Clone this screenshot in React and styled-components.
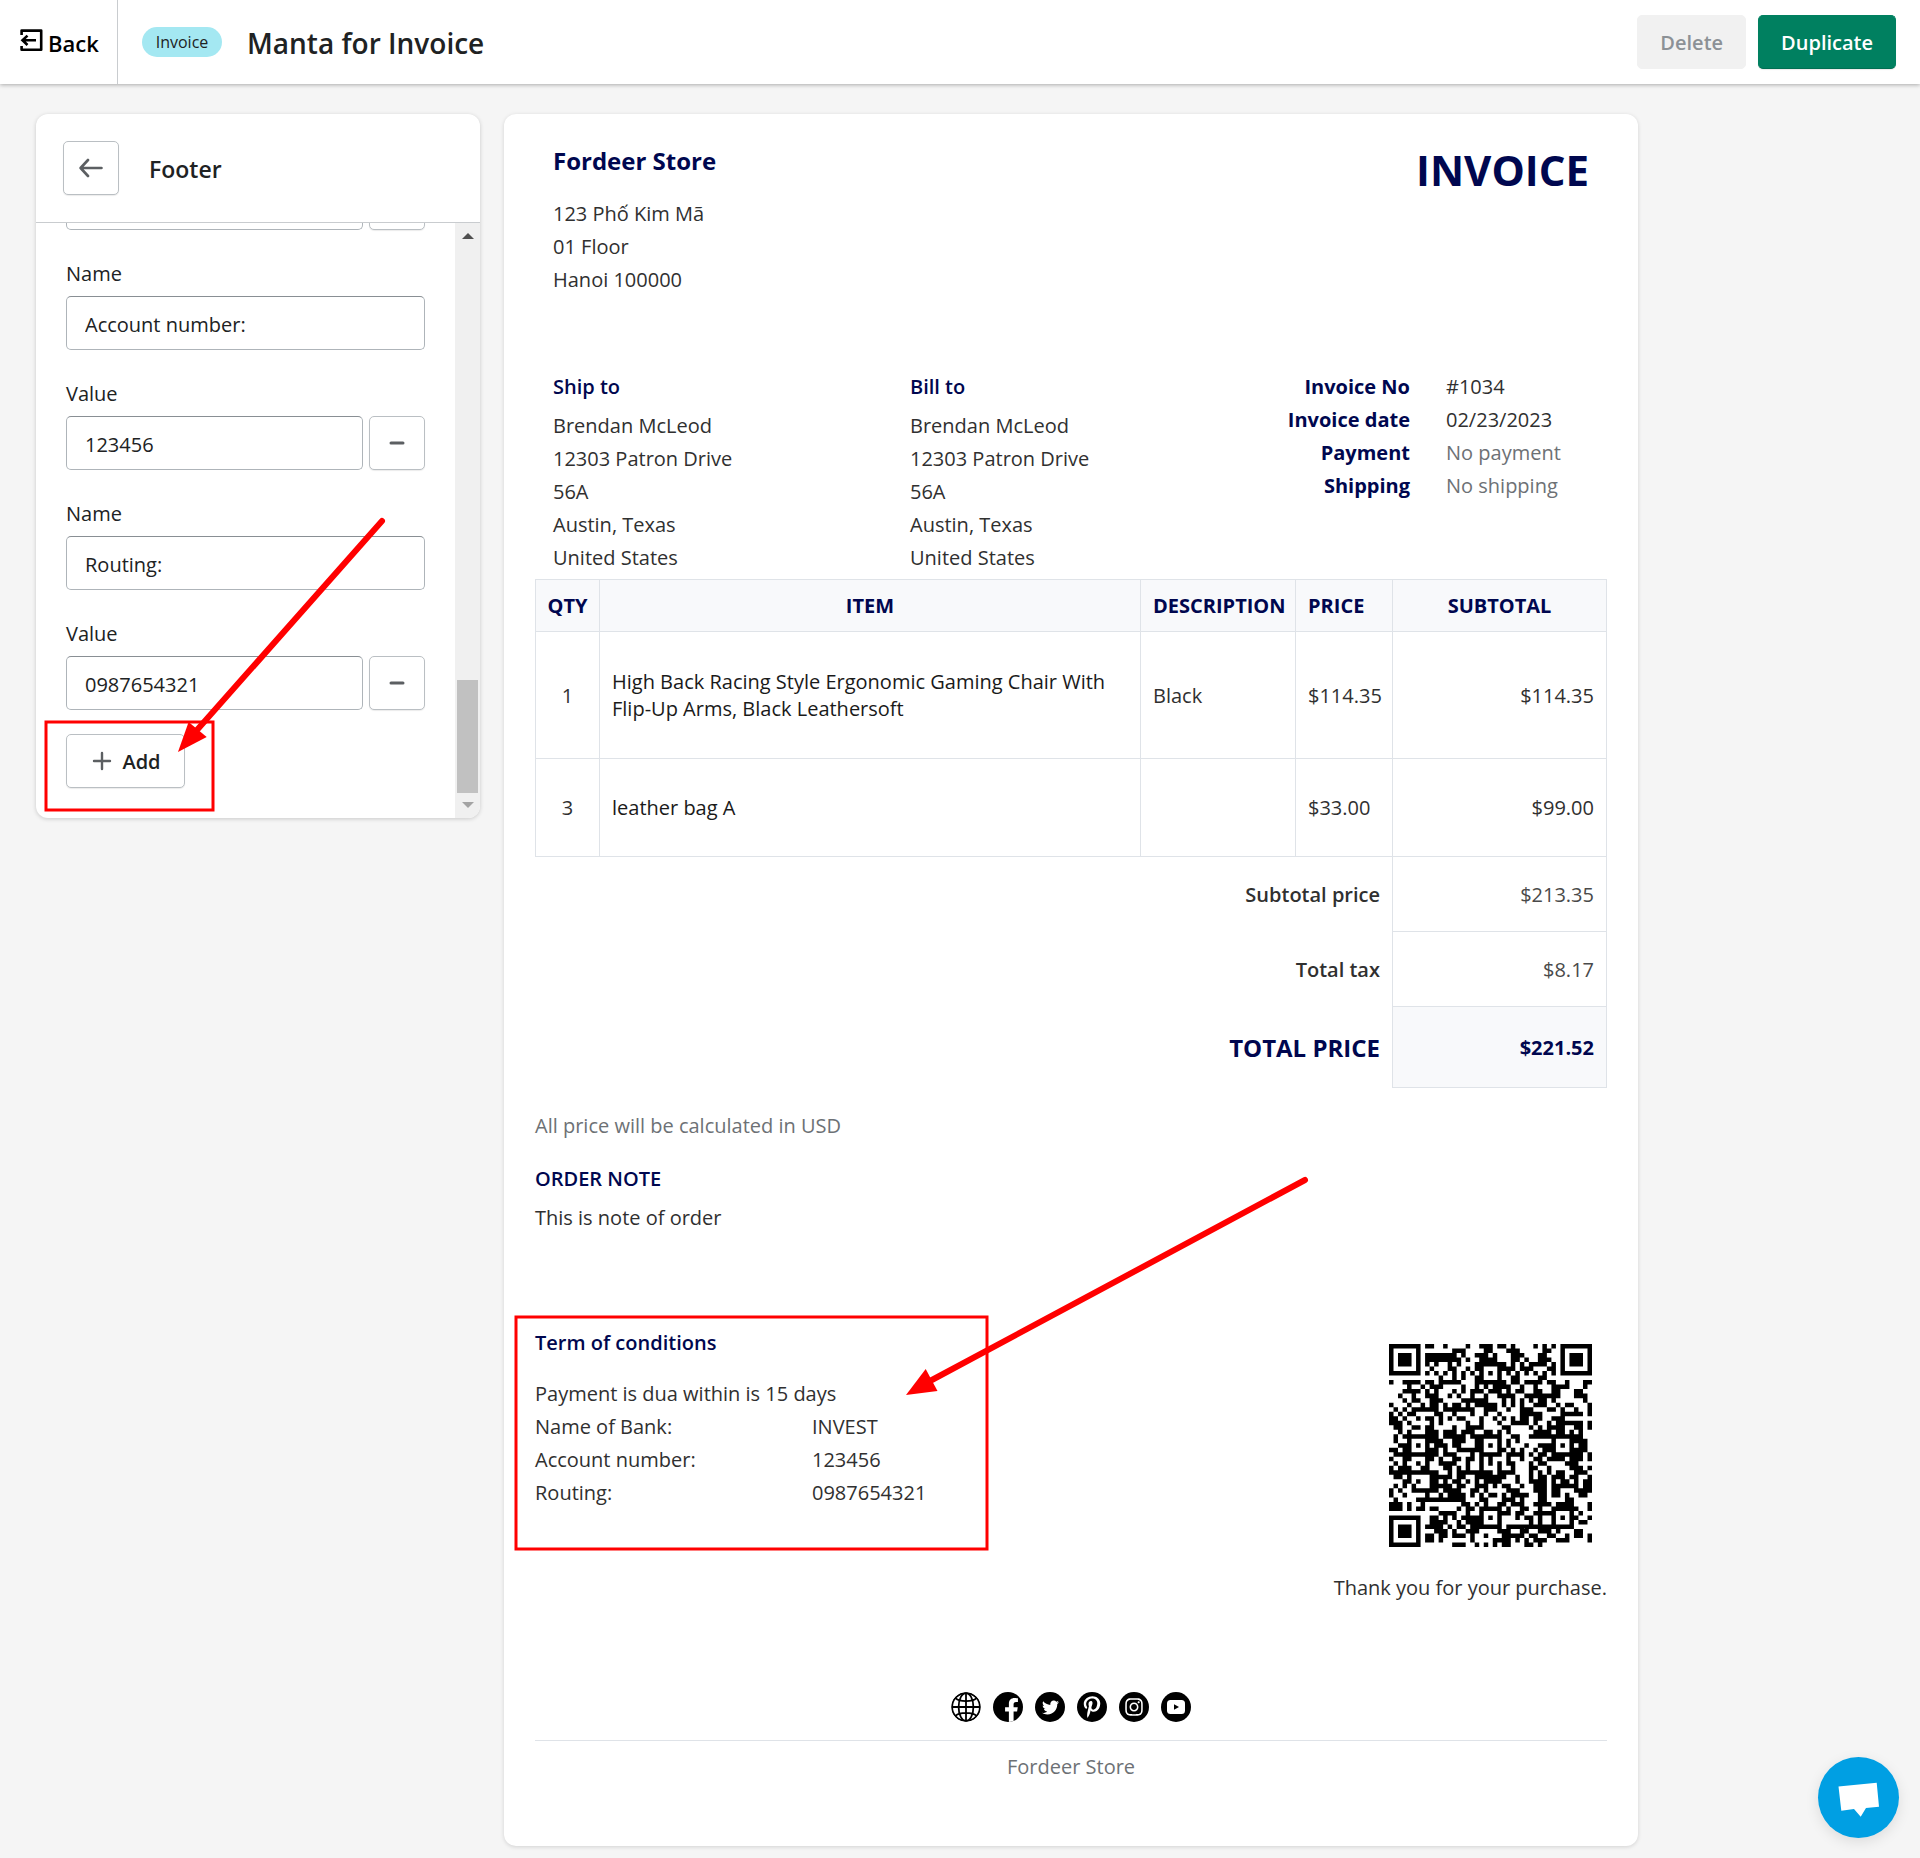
import React from "react";
import styled, { createGlobalStyle, css } from "styled-components";
import { FaFacebookF, FaTwitter, FaPinterestP, FaInstagram } from "react-icons/fa";

const GlobalStyle = createGlobalStyle`
  *, *::before, *::after { box-sizing: border-box; }
  body {
    margin: 0;
    background: #f5f5f5;
    color: #202223;
    font-family: "Open Sans", "Noto Sans", sans-serif;
    font-size: 20px;
    line-height: 28px;
  }
  button, input { font: inherit; color: inherit; }
  h1, h2, h3, p, dl, dd, dt, address { margin: 0; font: inherit; }
`;

const navy = "#00074f";
const line = "#dfe3e8";

const Page = styled.div`
  position: relative;
  min-height: 100vh;
`;

/* ---------- top bar ---------- */
const TopBar = styled.header`
  display: flex;
  align-items: stretch;
  height: 84px;
  background: #fff;
  box-shadow: 0 1px 4px rgba(0, 0, 0, 0.3);
`;

const BackLink = styled.a`
  display: flex;
  align-items: center;
  gap: 5px;
  width: 118px;
  padding-top: 2px;
  padding-left: 20px;
  border-right: 1px solid #c9cccf;
  color: #000;
  font-size: 22px;
  font-weight: 600;
  text-decoration: none;

  svg {
    margin-bottom: 6px;
  }
`;

const TitleGroup = styled.div`
  display: flex;
  flex: 1;
  align-items: center;
  gap: 25px;
  padding-left: 24px;
`;

const Badge = styled.span`
  min-width: 80px;
  padding: 0 12px;
  border-radius: 15px;
  background: #a4e8f2;
  font-size: 16px;
  line-height: 30px;
  text-align: center;
`;

const PageTitle = styled.h1`
  && {
    padding-top: 2px;
    font-size: 28px;
    font-weight: 600;
    line-height: 36px;
  }
`;

const Actions = styled.div`
  display: flex;
  align-items: center;
  gap: 12px;
  padding-right: 24px;
`;

const Button = styled.button`
  display: inline-flex;
  align-items: center;
  justify-content: center;
  gap: 8px;
  height: 54px;
  padding: 2px 22px 0;
  border: 1px solid #babfc3;
  border-radius: 5px;
  background: #fff;
  box-shadow: 0 1px 1px rgba(0, 0, 0, 0.08);
  font-weight: 600;
  ${(p) =>
    p.$kind === "primary" &&
    css`
      border-color: #008060;
      border-bottom-color: #006e52;
      background: #008060;
      color: #fff;
    `}
  ${(p) =>
    p.$kind === "disabled" &&
    css`
      border-color: #f1f1f1;
      background: #f1f1f1;
      box-shadow: none;
      color: #8c9196;
    `}
  ${(p) =>
    p.$kind === "icon" &&
    css`
      flex: none;
      width: 56px;
      padding: 0;
    `}
`;

/* ---------- workspace ---------- */
const Workspace = styled.main`
  display: grid;
  grid-template-columns: 444px minmax(0, 1134px);
  align-items: start;
  gap: 24px;
  padding: 30px 36px 12px;
`;

const Panel = styled.section`
  overflow: hidden;
  border-radius: 12px;
  background: #fff;
  box-shadow: 0 1px 4px rgba(0, 0, 0, 0.18);
`;

const PanelHeader = styled.div`
  display: flex;
  align-items: center;
  gap: 30px;
  height: 109px;
  padding: 0 27px;
  border-bottom: 1px solid #c9cccf;
`;

const PanelTitle = styled.h2`
  && {
    padding-top: 2px;
    font-size: 23px;
    font-weight: 600;
  }
`;

const PanelBody = styled.div`
  display: flex;
  height: 595px;
`;

const Fields = styled.form`
  display: flex;
  flex: 1;
  flex-direction: column;
  justify-content: flex-end;
  gap: 30px;
  overflow: hidden;
  padding: 0 30px 30px;
`;

const Field = styled.div`
  display: flex;
  flex: none;
  flex-direction: column;
  gap: 8px;
`;

const FieldRow = styled.div`
  display: flex;
  flex: none;
  gap: 6px;
`;

const TextInput = styled.input`
  width: 100%;
  min-width: 0;
  height: 54px;
  padding: 2px 18px 0;
  border: 1px solid #aeb4b9;
  border-top-color: #898f94;
  border-radius: 5px;
  background: #fff;
`;

const LastField = styled.div`
  display: flex;
  flex: none;
  flex-direction: column;
  align-items: stretch;
  gap: 24px;
`;

const AddButton = styled(Button)`
  align-self: flex-start;
  min-width: 119px;
`;

const ScrollTrack = styled.div`
  display: flex;
  flex-direction: column;
  align-items: center;
  width: 25px;
  padding: 10px 0;
  background: #f0f0f0;
`;

const ScrollArrow = styled.span`
  width: 0;
  height: 0;
  border: 6px solid transparent;
  ${(p) =>
    p.$up
      ? css`
          border-top: 0;
          border-bottom-color: #505050;
        `
      : css`
          border-bottom: 0;
          border-top-color: #a3a3a3;
        `}
`;

const ScrollThumb = styled.span`
  width: 21px;
  height: 113px;
  margin: auto 0 9px;
  background: #c1c1c1;
`;

/* ---------- invoice ---------- */
const Sheet = styled.article`
  display: flex;
  flex-direction: column;
  padding: 30px 31px 63px;
  border-radius: 12px;
  background: #fff;
  box-shadow: 0 1px 4px rgba(0, 0, 0, 0.14);
  color: #303030;
  line-height: 33px;
`;

const SheetTop = styled.div`
  display: flex;
  justify-content: space-between;
  height: 226px;
  padding: 0 18px;
`;

const StoreName = styled.h2`
  && {
    margin-bottom: 20px;
    color: ${navy};
    font-size: 24px;
    font-weight: 700;
  }
`;

const InvoiceTitle = styled.h1`
  && {
    color: ${navy};
    font-size: 42px;
    font-weight: 700;
    line-height: 52px;
  }
`;

const Address = styled.address`
  white-space: pre-line;
`;

const Parties = styled.div`
  display: grid;
  grid-template-columns: 357px minmax(0, 1fr) auto;
  min-height: 209px;
  padding: 0 18px;
`;

const Heading = styled.h3`
  && {
    margin-bottom: ${(p) => p.$gap}px;
    color: ${navy};
    font-weight: 600;
  }
`;

const Meta = styled.dl`
  display: grid;
  grid-template-columns: auto 143px;
  align-content: start;
  column-gap: 36px;

  dt {
    color: ${navy};
    font-weight: 700;
    text-align: right;
  }
`;

const MetaValue = styled.dd`
  color: ${(p) => (p.$muted ? "#6d7175" : "#303030")};
`;

const Items = styled.table`
  width: 100%;
  border-collapse: collapse;
  table-layout: fixed;
  line-height: 27px;
`;

const Col = styled.col`
  width: ${(p) => p.$w};
`;

const HeadCell = styled.th`
  height: 52px;
  padding: 0;
  padding-left: ${(p) => (p.$left ? "12px" : "0")};
  border: 1px solid ${line};
  background: #f8f9fb;
  color: ${navy};
  font-weight: 700;
  text-align: ${(p) => (p.$left ? "left" : "center")};
`;

const ItemRow = styled.tr`
  height: ${(p) => p.$h}px;
`;

const Cell = styled.td`
  padding: 0 12px;
  border: 1px solid ${line};
  color: ${(p) => (p.$dark ? "#1a1a1a" : "#303030")};
  text-align: ${(p) => p.$align || "left"};
`;

const TotalLabel = styled.th`
  padding: 0 12px;
  font-weight: 600;
  text-align: right;
  ${(p) =>
    p.$grand &&
    css`
      color: ${navy};
      font-size: 24px;
      font-weight: 700;
    `}
`;

const TotalValue = styled.td`
  padding: 0 12px;
  border: 1px solid ${line};
  color: #4a4a4a;
  text-align: right;
  ${(p) =>
    p.$grand &&
    css`
      background: #f8f9fb;
      color: ${navy};
      font-weight: 700;
    `}
`;

const Notes = styled.div`
  padding-top: 21px;
`;

const Muted = styled.p`
  && {
    margin-bottom: 20px;
    color: #6d7175;
  }
`;

const Closing = styled.div`
  display: flex;
  justify-content: space-between;
  padding-top: 92px;
`;

const Bank = styled.dl`
  display: grid;
  grid-template-columns: 277px auto;
`;

const Thanks = styled.div`
  display: flex;
  flex-direction: column;
  align-items: flex-end;
  gap: 24px;
  padding-top: 18px;

  svg {
    display: block;
    margin-right: 15px;
  }
`;

const Social = styled.nav`
  display: flex;
  justify-content: center;
  gap: 12px;
  padding: 88px 0 18px;
  border-bottom: 1px solid ${line};
`;

const SocialLink = styled.a`
  display: flex;
  align-items: center;
  justify-content: center;
  width: 30px;
  height: 30px;
  overflow: hidden;
  border-radius: 50%;
  background: ${(p) => (p.$plain ? "transparent" : "#000")};
  color: #fff;
`;

const SheetFooter = styled.footer`
  padding-top: 9px;
  color: #6d7175;
  text-align: center;
`;

/* ---------- overlays ---------- */
const Marks = styled.svg`
  position: absolute;
  top: 0;
  left: 0;
  pointer-events: none;
`;

const ChatButton = styled.button`
  position: fixed;
  right: 21px;
  bottom: 20px;
  width: 81px;
  height: 81px;
  padding: 0;
  border: 0;
  border-radius: 50%;
  background: #009fe3;
  box-shadow: 0 4px 14px rgba(0, 0, 0, 0.1);

  svg {
    display: block;
  }
`;

/* ---------- drawings ---------- */
const ExitIcon = () => (
  <svg width="23" height="23" viewBox="0 0 23 23" fill="none" stroke="#000" strokeWidth="2.6" aria-hidden="true">
    <path d="M1.6 6V1.6h19.6v19.2H1.6V17" strokeLinejoin="round" />
    <path d="M16 11.300H3.500M7.500 6.600l-5 4.700 5 4.700" />
  </svg>
);

const ArrowLeftIcon = () => (
  <svg width="24" height="24" viewBox="0 0 24 24" fill="none" stroke="#5c5f62" strokeWidth="2.6" strokeLinecap="round" strokeLinejoin="round" aria-hidden="true">
    <path d="M22.500 12H2M9 4L1.600 12 9 20" />
  </svg>
);

const MinusIcon = () => (
  <svg width="16" height="16" viewBox="0 0 16 16" stroke="#5c5f62" strokeWidth="3" strokeLinecap="round" aria-hidden="true">
    <path d="M2 8h12" />
  </svg>
);

const PlusIcon = () => (
  <svg width="24" height="24" viewBox="0 0 24 24" stroke="#5c5f62" strokeWidth="2.4" strokeLinecap="round" aria-hidden="true">
    <path d="M4 11h16M12 3v16" />
  </svg>
);

const GlobeIcon = () => (
  <svg width="30" height="30" viewBox="0 0 30 30" fill="none" stroke="#000" strokeWidth="1.8" aria-hidden="true">
    <circle cx="15" cy="15" r="13.9" />
    <ellipse cx="15" cy="15" rx="7.4" ry="13.9" />
    <path d="M15 1v28M1 15h28M4.500 6.200C7 8.600 11 9.200 15 9.200s8-.6 10.500-3M4.500 23.800C7 21.400 11 20.800 15 20.800s8 .6 10.500 3" />
  </svg>
);

const YoutubeIcon = () => (
  <svg width="18" height="14" viewBox="0 0 18 14" aria-hidden="true">
    <rect width="18" height="14" rx="3.500" fill="#fff" />
    <path d="M7 4.200v5.600L12 7z" fill="#000" />
  </svg>
);

const FacebookGlyph = styled(FaFacebookF)`
  margin: 6px 0 0 7px;
`;

const QR_SIZE = 45;
const QR_ALIGN = [
  [22, 6],
  [6, 22],
  [22, 22],
  [38, 22],
  [22, 38],
  [38, 38],
];

function qrPath() {
  const n = QR_SIZE;
  const ring = (x, y, cx, cy) => Math.max(Math.abs(x - cx), Math.abs(y - cy));
  let seed = 20230223;
  let path = "";
  for (let y = 0; y < n; y++) {
    for (let x = 0; x < n; x++) {
      seed = (Math.imul(seed, 1664525) + 1013904223) >>> 0;
      let on = seed / 4294967296 < 0.52;
      const right = x > n - 9;
      const bottom = y > n - 9;
      const mark = QR_ALIGN.find(([cx, cy]) => ring(x, y, cx, cy) < 3);
      if ((x < 8 && y < 8) || (right && y < 8) || (x < 8 && bottom)) {
        const d = ring(x, y, right ? n - 4 : 3, bottom ? n - 4 : 3);
        on = d === 3 || d < 2;
      } else if (mark) {
        on = ring(x, y, mark[0], mark[1]) !== 1;
      } else if (y === 6 || x === 6) {
        on = (x + y) % 2 === 0;
      }
      if (on) path += `M${x} ${y}h1v1h-1z`;
    }
  }
  return path;
}

const QrCode = () => (
  <svg width="203" height="203" viewBox={`0 0 ${QR_SIZE} ${QR_SIZE}`} role="img" aria-label="QR code">
    <path d={qrPath()} fill="#000" />
  </svg>
);

const ChatIcon = () => (
  <svg width="81" height="81" viewBox="0 0 81 81" aria-hidden="true">
    <path d="M20.500 29.500L58.700 25.700L61 49.700L48 51L42.700 59.700L36 52L23.300 53.700Z" fill="#fff" />
  </svg>
);

const Annotations = () => (
  <Marks width="1400" height="1600" viewBox="0 0 1400 1600" aria-hidden="true">
    <g fill="none" stroke="#f00">
      <rect x="46" y="722" width="167" height="88" strokeWidth="3" />
      <rect x="516" y="1317" width="471" height="232" strokeWidth="3" />
      <path d="M382 521L197 730" strokeWidth="6" strokeLinecap="round" />
      <path d="M1305 1180L930 1381" strokeWidth="6" strokeLinecap="round" />
    </g>
    <g fill="#f00">
      <path d="M178 752L188.600 722L206.700 737Z" />
      <path d="M906 1395L925.700 1369L937.500 1391Z" />
    </g>
  </Marks>
);

/* ---------- parts ---------- */
const RemoveButton = () => (
  <Button type="button" $kind="icon" aria-label="Remove">
    <MinusIcon />
  </Button>
);

const NameField = ({ id, value }) => (
  <Field>
    <label htmlFor={id}>Name</label>
    <TextInput id={id} type="text" defaultValue={value} />
  </Field>
);

const ValueField = ({ id, value }) => (
  <Field>
    <label htmlFor={id}>Value</label>
    <FieldRow>
      <TextInput id={id} type="text" defaultValue={value} />
      <RemoveButton />
    </FieldRow>
  </Field>
);

const customer = "Brendan McLeod\n12303 Patron Drive\n56A\nAustin, Texas\nUnited States";

const items = [
  { qty: 1, name: "High Back Racing Style Ergonomic Gaming Chair With Flip-Up Arms, Black Leathersoft", note: "Black", price: "$114.35", sum: "$114.35", h: 127 },
  { qty: 3, name: "leather bag A", note: "", price: "$33.00", sum: "$99.00", h: 98 },
];

const totals = [
  { label: "Subtotal price", value: "$213.35", h: 75 },
  { label: "Total tax", value: "$8.17", h: 75 },
  { label: "TOTAL PRICE", value: "$221.52", h: 81, grand: true },
];

const bank = [
  ["Name of Bank:", "INVEST"],
  ["Account number:", "123456"],
  ["Routing:", "0987654321"],
];

export default function App() {
  return (
    <Page>
      <GlobalStyle />
      <TopBar>
        <BackLink href="#back">
          <ExitIcon />
          Back
        </BackLink>
        <TitleGroup>
          <Badge>Invoice</Badge>
          <PageTitle>Manta for Invoice</PageTitle>
        </TitleGroup>
        <Actions>
          <Button type="button" $kind="disabled" disabled>
            Delete
          </Button>
          <Button type="button" $kind="primary">
            Duplicate
          </Button>
        </Actions>
      </TopBar>

      <Workspace>
        <Panel>
          <PanelHeader>
            <Button type="button" $kind="icon" aria-label="Back to sections">
              <ArrowLeftIcon />
            </Button>
            <PanelTitle>Footer</PanelTitle>
          </PanelHeader>
          <PanelBody>
            <Fields>
              <FieldRow>
                <TextInput type="text" aria-label="Value" />
                <RemoveButton />
              </FieldRow>
              <NameField id="account-name" value="Account number:" />
              <ValueField id="account-value" value="123456" />
              <NameField id="routing-name" value="Routing:" />
              <LastField>
                <ValueField id="routing-value" value="0987654321" />
                <AddButton type="button">
                  <PlusIcon />
                  Add
                </AddButton>
              </LastField>
            </Fields>
            <ScrollTrack>
              <ScrollArrow $up />
              <ScrollThumb />
              <ScrollArrow />
            </ScrollTrack>
          </PanelBody>
        </Panel>

        <Sheet>
          <SheetTop>
            <div>
              <StoreName>Fordeer Store</StoreName>
              <Address>{"123 Phố Kim Mã\n01 Floor\nHanoi 100000"}</Address>
            </div>
            <InvoiceTitle>INVOICE</InvoiceTitle>
          </SheetTop>

          <Parties>
            <div>
              <Heading $gap={6}>Ship to</Heading>
              <Address>{customer}</Address>
            </div>
            <div>
              <Heading $gap={6}>Bill to</Heading>
              <Address>{customer}</Address>
            </div>
            <Meta>
              <dt>Invoice No</dt>
              <MetaValue>#1034</MetaValue>
              <dt>Invoice date</dt>
              <MetaValue>02/23/2023</MetaValue>
              <dt>Payment</dt>
              <MetaValue $muted>No payment</MetaValue>
              <dt>Shipping</dt>
              <MetaValue $muted>No shipping</MetaValue>
            </Meta>
          </Parties>

          <Items>
            <colgroup>
              <Col $w="64px" />
              <Col $w="auto" />
              <Col $w="155px" />
              <Col $w="97px" />
              <Col $w="214px" />
            </colgroup>
            <thead>
              <tr>
                <HeadCell scope="col">QTY</HeadCell>
                <HeadCell scope="col">ITEM</HeadCell>
                <HeadCell scope="col" $left>DESCRIPTION</HeadCell>
                <HeadCell scope="col" $left>PRICE</HeadCell>
                <HeadCell scope="col">SUBTOTAL</HeadCell>
              </tr>
            </thead>
            <tbody>
              {items.map((it) => (
                <ItemRow key={it.qty} $h={it.h}>
                  <Cell $align="center">{it.qty}</Cell>
                  <Cell $dark>{it.name}</Cell>
                  <Cell>{it.note}</Cell>
                  <Cell>{it.price}</Cell>
                  <Cell $align="right">{it.sum}</Cell>
                </ItemRow>
              ))}
            </tbody>
            <tfoot>
              {totals.map((t) => (
                <ItemRow key={t.label} $h={t.h}>
                  <TotalLabel scope="row" colSpan={4} $grand={t.grand}>
                    {t.label}
                  </TotalLabel>
                  <TotalValue $grand={t.grand}>{t.value}</TotalValue>
                </ItemRow>
              ))}
            </tfoot>
          </Items>

          <Notes>
            <Muted>All price will be calculated in USD</Muted>
            <Heading $gap={6}>ORDER NOTE</Heading>
            <p>This is note of order</p>
          </Notes>

          <Closing>
            <div>
              <Heading $gap={18}>Term of conditions</Heading>
              <p>Payment is dua within is 15 days</p>
              <Bank>
                {bank.map(([k, v]) => (
                  <React.Fragment key={k}>
                    <dt>{k}</dt>
                    <dd>{v}</dd>
                  </React.Fragment>
                ))}
              </Bank>
            </div>
            <Thanks>
              <QrCode />
              <p>Thank you for your purchase.</p>
            </Thanks>
          </Closing>

          <Social aria-label="Social links">
            <SocialLink href="#web" aria-label="Website" $plain>
              <GlobeIcon />
            </SocialLink>
            <SocialLink href="#facebook" aria-label="Facebook">
              <FacebookGlyph size={24} />
            </SocialLink>
            <SocialLink href="#twitter" aria-label="Twitter">
              <FaTwitter size={17} />
            </SocialLink>
            <SocialLink href="#pinterest" aria-label="Pinterest">
              <FaPinterestP size={22} />
            </SocialLink>
            <SocialLink href="#instagram" aria-label="Instagram">
              <FaInstagram size={20} />
            </SocialLink>
            <SocialLink href="#youtube" aria-label="YouTube">
              <YoutubeIcon />
            </SocialLink>
          </Social>
          <SheetFooter>Fordeer Store</SheetFooter>
        </Sheet>
      </Workspace>

      <Annotations />
      <ChatButton type="button" aria-label="Open chat">
        <ChatIcon />
      </ChatButton>
    </Page>
  );
}
